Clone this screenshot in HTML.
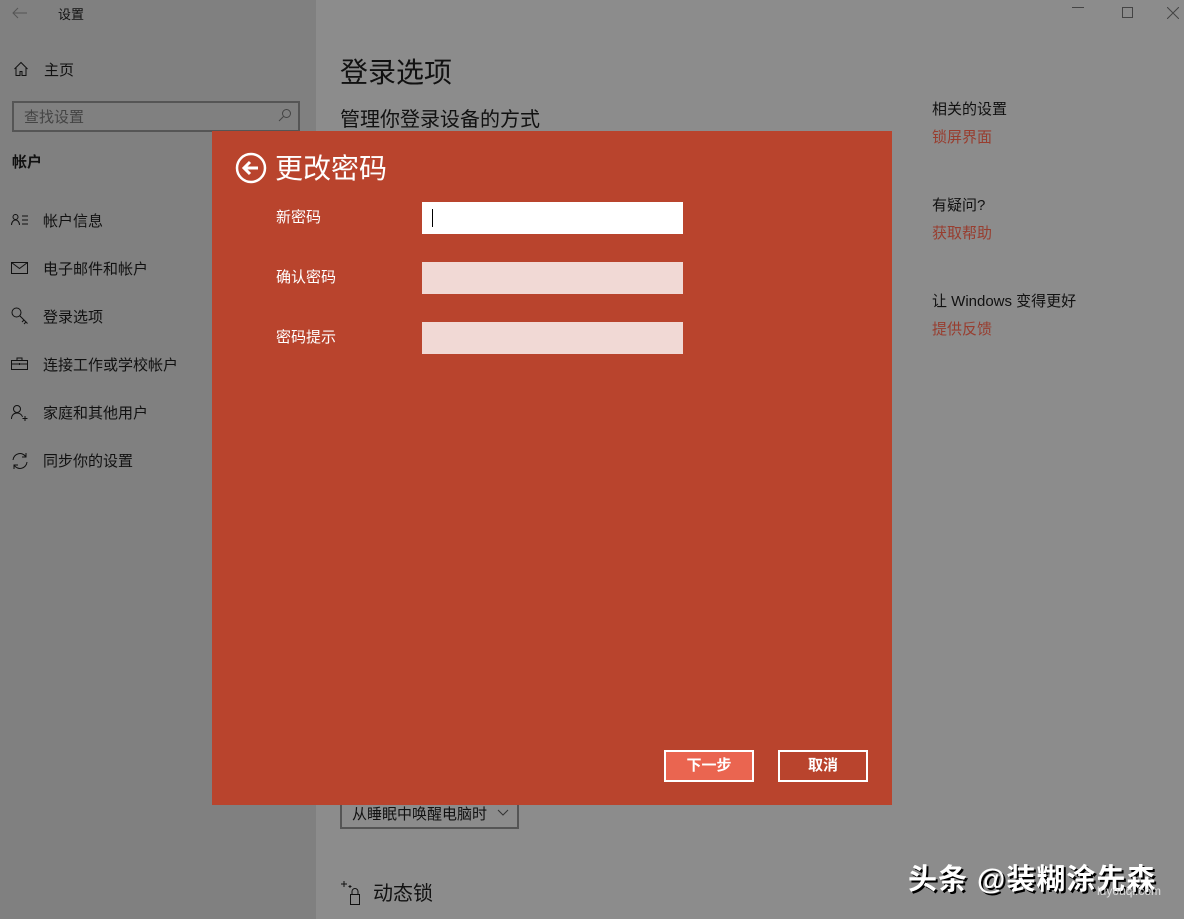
<!DOCTYPE html>
<html><head><meta charset="utf-8"><style>
*{margin:0;padding:0;box-sizing:border-box}
body{width:1184px;height:919px;overflow:hidden;background:#8c8c8c;font-family:"Liberation Sans","Noto Sans CJK SC",sans-serif;color:#111;position:relative}
.a{position:absolute;white-space:nowrap}
#side{position:absolute;left:0;top:0;width:316px;height:919px;background:#808080}
.f15{font-size:15px}
.link{color:#983d2f;font-size:15px}
#dlg{position:absolute;left:212px;top:131px;width:680px;height:674px;background:#b9442d}
.inp{position:absolute;left:210px;width:261px;height:32px;background:#f1d9d5}
.lbl{position:absolute;left:64px;color:#fff;font-size:15px}
.btn{position:absolute;top:619px;width:90px;height:32px;border:2px solid #fff;color:#fff;font-size:15px;font-weight:bold;text-align:center;line-height:28px}
svg{position:absolute}
</style></head><body>
<div id="side"></div>
<svg style="left:12px;top:7px" width="16" height="12" viewBox="0 0 16 12"><path d="M15 6H1M6 1L1 6l5 5" stroke="#555" fill="none"/></svg>
<div class="a" style="left:58px;top:4px;font-size:13px">设置</div>
<svg style="left:13px;top:61px" width="16" height="16" viewBox="0 0 16 16"><path d="M1.5 8L8 1.5 14.5 8M3 7v7.5h4v-4h2v4h4V7" stroke="#111" fill="none"/></svg>
<div class="a f15" style="left:44px;top:59px">主页</div>
<div class="a" style="left:12px;top:101px;width:288px;height:31px;border:2px solid #555"></div>
<div class="a f15" style="left:24px;top:106px;color:#444">查找设置</div>
<svg style="left:278px;top:108px" width="14" height="14" viewBox="0 0 14 14"><circle cx="8.5" cy="5.5" r="4" stroke="#444" fill="none"/><path d="M5.5 8.5L1 13" stroke="#444"/></svg>
<div class="a" style="left:12px;top:151px;font-size:15px;font-weight:bold">帐户</div>
<svg style="left:11px;top:213px" width="18" height="14" viewBox="0 0 18 14"><circle cx="4.5" cy="4" r="2.5" stroke="#111" fill="none"/><path d="M0.5 12c0-3 2-5 4-5s4 2 4 5M11 3h6M11 7h6M11 11h6" stroke="#111" fill="none"/></svg>
<div class="a f15" style="left:43px;top:210px">帐户信息</div>
<svg style="left:11px;top:262px" width="18" height="13" viewBox="0 0 18 13"><rect x="0.5" y="0.5" width="16" height="11" stroke="#111" fill="none"/><path d="M0.5 0.5l8 6 8-6" stroke="#111" fill="none"/></svg>
<div class="a f15" style="left:43px;top:258px">电子邮件和帐户</div>
<svg style="left:11px;top:307px" width="18" height="18" viewBox="0 0 18 18"><circle cx="5.5" cy="5.5" r="4.5" stroke="#111" fill="none"/><path d="M8.5 8.5l8 8M13 13l-2 2M15 15l-2 2" stroke="#111" fill="none"/></svg>
<div class="a f15" style="left:43px;top:306px">登录选项</div>
<svg style="left:11px;top:357px" width="18" height="14" viewBox="0 0 18 14"><rect x="0.5" y="3.5" width="16" height="9" stroke="#111" fill="none"/><path d="M6 3.5V1h5v2.5M0.5 7h16M8.5 6v2" stroke="#111" fill="none"/></svg>
<div class="a f15" style="left:43px;top:354px">连接工作或学校帐户</div>
<svg style="left:11px;top:404px" width="18" height="18" viewBox="0 0 18 18"><circle cx="6" cy="5" r="3.5" stroke="#111" fill="none"/><path d="M0.5 15c0-4 2.5-6 5.5-6s5 2 5.5 4M14 12v5M11.5 14.5h5" stroke="#111" fill="none"/></svg>
<div class="a f15" style="left:43px;top:402px">家庭和其他用户</div>
<svg style="left:11px;top:452px" width="18" height="18" viewBox="0 0 18 18"><path d="M2 8a7 7 0 0 1 13-3M16 10a7 7 0 0 1-13 3M15 1v4h-4M3 17v-4h4" stroke="#111" fill="none"/></svg>
<div class="a f15" style="left:43px;top:450px">同步你的设置</div>

<div class="a" style="left:340px;top:51px;font-size:28px">登录选项</div>
<div class="a" style="left:340px;top:103px;font-size:20px">管理你登录设备的方式</div>
<div class="a" style="left:340px;top:800px;width:179px;height:29px;border:2px solid #555;border-top:none"></div>
<div class="a f15" style="left:352px;top:803px">从睡眠中唤醒电脑时</div>
<svg style="left:497px;top:809px" width="12" height="8" viewBox="0 0 12 8"><path d="M1 1l5 5 5-5" stroke="#333" fill="none"/></svg>
<svg style="left:340px;top:880px" width="24" height="26" viewBox="0 0 24 26"><path d="M4 1v6M1 4h6M10 5v3M8.5 6.5h3" stroke="#111"/><rect x="10.5" y="14.5" width="9" height="10" stroke="#111" fill="none"/><path d="M12 14.5v-3a3 3 0 0 1 6 0v3" stroke="#111" fill="none"/></svg>
<div class="a" style="left:373px;top:877px;font-size:20px">动态锁</div>

<div class="a" style="left:1072px;top:7px;width:12px;height:1px;background:#444"></div>
<div class="a" style="left:1122px;top:7px;width:11px;height:11px;border:1px solid #444"></div>
<svg style="left:1167px;top:7px" width="12" height="12" viewBox="0 0 12 12"><path d="M0 0l12 12M12 0L0 12" stroke="#444"/></svg>
<div class="a f15" style="left:932px;top:98px">相关的设置</div>
<div class="a link" style="left:932px;top:126px">锁屏界面</div>
<div class="a f15" style="left:932px;top:194px">有疑问?</div>
<div class="a link" style="left:932px;top:222px">获取帮助</div>
<div class="a f15" style="left:932px;top:290px">让 Windows 变得更好</div>
<div class="a link" style="left:932px;top:318px">提供反馈</div>

<div class="a" style="left:908px;top:856px;font-size:29px;font-weight:bold;color:#fff;letter-spacing:1px;text-shadow:2px 2px 0 #000">头条 @装糊涂先森</div>
<div class="a" style="left:1097px;top:884px;font-size:12px;color:#ddd">luyouqi.com</div>

<div id="dlg">
<svg style="left:23px;top:21px" width="32" height="32" viewBox="0 0 32 32"><circle cx="16" cy="16" r="14" stroke="#fff" stroke-width="2.5" fill="none"/><path d="M23 16H10M15 10l-6 6 6 6" stroke="#fff" stroke-width="3" fill="none"/></svg>
<div class="a" style="left:63px;top:16px;font-size:28px;color:#fff">更改密码</div>
<div class="lbl" style="top:75px">新密码</div>
<div class="inp" style="top:71px;background:#fff"><div style="position:absolute;left:10px;top:7px;width:1px;height:18px;background:#000"></div></div>
<div class="lbl" style="top:135px">确认密码</div>
<div class="inp" style="top:131px"></div>
<div class="lbl" style="top:195px">密码提示</div>
<div class="inp" style="top:191px"></div>
<div class="btn" style="left:452px;background:#ea6550">下一步</div>
<div class="btn" style="left:566px">取消</div>
</div>
</body></html>
